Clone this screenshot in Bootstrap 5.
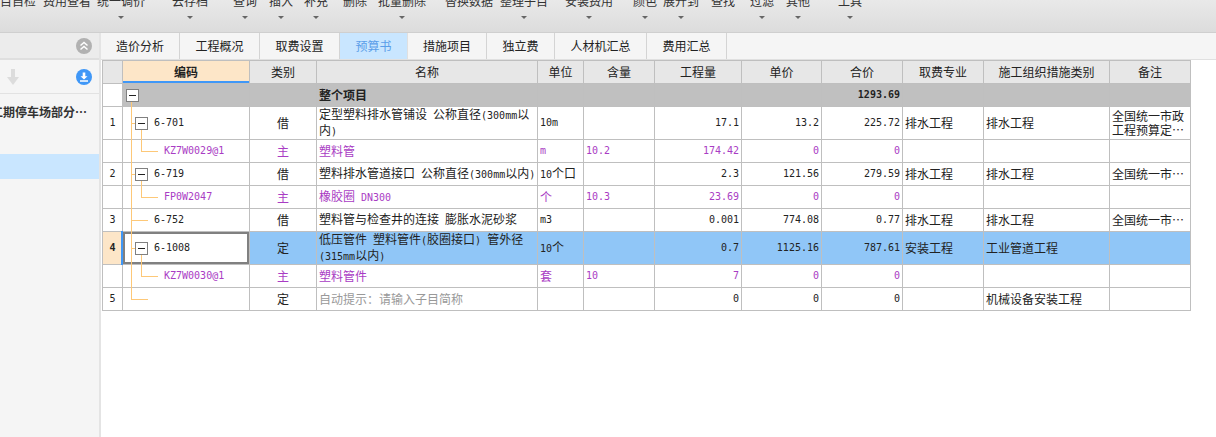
<!DOCTYPE html>
<html lang="zh-CN">
<head>
  <meta charset="UTF-8">
  <title>预算书</title>
  <link href="https://cdn.jsdelivr.net/npm/bootstrap@5.3.0/dist/css/bootstrap.min.css" rel="stylesheet">
  <style>
    html, body { height: 100%; overflow: hidden; }
    body {
      background: #fff;
      color: #222;
      font-family: "Noto Sans CJK SC", "Liberation Sans", sans-serif;
      font-size: 12px;
      line-height: 14px;
    }
    .ltn { font-family: "DejaVu Sans Mono", "Liberation Mono", monospace; font-size: 10px; }

    /* toolbar */
    .tool-bar {
      height: 33px;
      overflow: hidden;
      background: linear-gradient(#e9e9e9, #dcdcdc);
      border-bottom: 1px solid #cfcfcf;
    }
    .tool-grid {
      display: grid;
      grid-template-columns: 43px 54px 75px 61px 36px 35px 39px 35px 67px 55px 65px 68px 30px 48px 39px 36px 52px 48px;
      margin-top: -6px;
    }
    .tool-item { display: inline-flex; flex-direction: column; align-items: center; width: fit-content; height: 26px; color: #333; white-space: nowrap; }
    .tool-arrow {
      margin-top: 8px;
      border-left: 3px solid transparent;
      border-right: 3px solid transparent;
      border-top: 3px solid #666;
    }

    /* left panel */
    .side-panel { width: 101px; flex: none; height: 404px; background: #f5f5f5; border-right: 2px solid #e4e4e4; }
    .side-head { height: 27px; background: #ececec; border-bottom: 2px solid #dfdfdf; padding-right: 7px; }
    .side-tools { height: 34px; border-bottom: 1px solid #e2e2e2; padding: 0 7px 0 7px; }
    .side-title { height: 27px; padding-top: 11px; font-weight: 700; color: #333; white-space: nowrap; margin-left: -9px; }
    .side-gap { height: 33px; }
    .side-sel { height: 25px; background: #c9e6ff; }

    /* tabs */
    .tab-strip { height: 27px; background: #f5f5f5; border-bottom: 1px solid #e0e0e0; }
    .tab-cell {
      height: 26px;
      flex: none;
      border-right: 1px solid #d4d4d4;
      color: #222;
    }
    .tab-cell.active-tab { background: #c9e6ff; color: #5b9ee9; border-right-color: #e0e0e0; }
    .w-79 { width: 79px; }
    .w-80 { width: 80px; }
    .w-68 { width: 68px; }
    .w-92 { width: 92px; }

    /* sheet */
    .sheet-table.table { width: 1089px; table-layout: fixed; border-color: #bfbfbf; margin: 0 0 0 1px; --bs-table-color: #222; }
    .sheet-table.table > :not(caption) > * > * {
      padding: 0 2px;
      border-width: 1px;
      vertical-align: middle;
      font-weight: 400;
    }
    .sheet-table th { height: 23px; text-align: center; --bs-table-bg: #e7e7e7; font-size: 12px; }
    .sheet-table th.code-head { --bs-table-bg: #fde6c8; font-weight: 700 !important; box-shadow: inset 0 -2px 0 #3f97f7; }
    .sheet-table td { height: 23px; }
    .sheet-table tr.tall td { height: 33px; }
    .sheet-table tr.total { --bs-table-bg: #c0c0c0; }
    .sheet-table tr.total td { font-weight: 700 !important; }
    .sheet-table tr.picked { --bs-table-bg: #90c6f7; }
    .sheet-table tr.item-main { --bs-table-color: #a93cc4; color: #a93cc4; }
    .sheet-table td.row-no { text-align: center; --bs-table-bg: #fff; }
    .sheet-table td.row-on { --bs-table-bg: #fde6c8; font-weight: 700 !important; }
    .sheet-table td.num { text-align: right; }
    .sheet-table td.kind { text-align: center; }
    .sheet-table td.hint { color: #999; }
    .sheet-table td.name-cell { padding-right: 0 !important; }
    .sheet-table td.code-cell { position: relative; --bs-table-bg: #fff; padding-left: 31px !important; }
    .sheet-table td.code-cell.sub { padding-left: 41px !important; }
    .sheet-table td.code-cell.bar-top { --bs-table-bg: #c0c0c0; padding-left: 0 !important; }
    .sheet-table td.code-on { box-shadow: inset 0 0 0 2px #808080; }
    .code-on-mark { position: absolute; left: -2px; top: -1px; bottom: -1px; width: 2px; background: #3f97f7; }

    /* tree lines sit over the code cell */
    .tree-main { position: absolute; left: 8px; top: -1px; bottom: -1px; width: 1px; background: #fdc878; }
    .tree-main.end { bottom: 50%; }
    .tree-main.start { top: 18px; }
    .tree-dash { position: absolute; left: 8px; top: 50%; height: 1px; width: 5px; background: #fdc878; }
    .tree-dash.long { width: 17px; }
    .tree-sub { position: absolute; left: 18px; top: -1px; height: calc(50% + 1px); width: 1px; background: #fdc878; }
    .tree-sub-h { position: absolute; left: 18px; top: 50%; height: 1px; width: 17px; background: #fdc878; }
    .tree-stub { position: absolute; left: 18px; top: calc(50% + 6px); bottom: -1px; width: 1px; background: #fdc878; }
    .fold-box {
      position: absolute;
      left: 12px;
      top: calc(50% - 6px);
      width: 13px;
      height: 13px;
      background: #fff;
      border: 1px solid #808080;
    }
    .fold-box::after { content: ""; position: absolute; left: 2px; right: 2px; top: 5px; height: 1px; background: #222; }
    .fold-box.root { left: 3px; }
  </style>
</head>
<body>
  <!-- toolbar, scrolled so the big icons are out of view -->
  <div class="tool-bar">
    <div class="tool-grid">
      <div><span class="tool-item">目自检</span></div>
      <div><span class="tool-item">费用查看</span></div>
      <div><span class="tool-item">统一调价<i class="tool-arrow"></i></span></div>
      <div><span class="tool-item">云存档<i class="tool-arrow"></i></span></div>
      <div><span class="tool-item">查询<i class="tool-arrow"></i></span></div>
      <div><span class="tool-item">插入<i class="tool-arrow"></i></span></div>
      <div><span class="tool-item">补充<i class="tool-arrow"></i></span></div>
      <div><span class="tool-item">删除</span></div>
      <div><span class="tool-item">批量删除<i class="tool-arrow"></i></span></div>
      <div><span class="tool-item">替换数据</span></div>
      <div><span class="tool-item">整理子目<i class="tool-arrow"></i></span></div>
      <div><span class="tool-item">安装费用<i class="tool-arrow"></i></span></div>
      <div><span class="tool-item">颜色<i class="tool-arrow"></i></span></div>
      <div><span class="tool-item">展开到<i class="tool-arrow"></i></span></div>
      <div><span class="tool-item">查找</span></div>
      <div><span class="tool-item">过滤<i class="tool-arrow"></i></span></div>
      <div><span class="tool-item">其他<i class="tool-arrow"></i></span></div>
      <div><span class="tool-item">工具<i class="tool-arrow"></i></span></div>
    </div>
  </div>

  <div class="d-flex">
    <!-- left panel -->
    <div class="side-panel">
      <div class="side-head d-flex justify-content-end align-items-center">
        <svg width="16" height="16" viewBox="0 0 16 16"><circle cx="8" cy="8" r="8" fill="#b1b1b1"/><path d="M4.5 7.5 8 4.5l3.5 3M4.5 11.5 8 8.5l3.5 3" fill="none" stroke="#fff" stroke-width="1.5"/></svg>
      </div>
      <div class="side-tools d-flex justify-content-between align-items-center">
        <svg width="12" height="16" viewBox="0 0 12 16"><path d="M4 0h4v8h4l-6 8-6-8h4z" fill="#dcdcdc"/></svg>
        <svg width="16" height="16" viewBox="0 0 16 16"><circle cx="8" cy="8" r="8" fill="#3f97f7"/><path d="M6.700 3.500h2.600v3.700h2.200L8 10.400 4.500 7.200h2.200zM4 11.300h8v1.400H4z" fill="#fff"/></svg>
      </div>
      <div class="side-title">工期停车场部分…</div>
      <div class="side-gap"></div>
      <div class="side-sel"></div>
    </div>

    <div class="flex-grow-1">
      <!-- tabs -->
      <div class="tab-strip d-flex">
        <div class="tab-cell w-79 d-flex align-items-center justify-content-center">造价分析</div>
        <div class="tab-cell w-80 d-flex align-items-center justify-content-center">工程概况</div>
        <div class="tab-cell w-80 d-flex align-items-center justify-content-center">取费设置</div>
        <div class="tab-cell w-68 d-flex align-items-center justify-content-center active-tab">预算书</div>
        <div class="tab-cell w-79 d-flex align-items-center justify-content-center">措施项目</div>
        <div class="tab-cell w-68 d-flex align-items-center justify-content-center">独立费</div>
        <div class="tab-cell w-92 d-flex align-items-center justify-content-center">人材机汇总</div>
        <div class="tab-cell w-80 d-flex align-items-center justify-content-center">费用汇总</div>
      </div>

      <!-- budget sheet -->
      <div>
        <table class="table table-bordered sheet-table">
          <colgroup>
            <col width="20"><col width="127"><col width="67"><col width="221"><col width="46"><col width="71">
            <col width="87"><col width="80"><col width="81"><col width="81"><col width="126"><col width="81">
          </colgroup>
          <thead>
            <tr>
              <th></th><th class="code-head">编码</th><th>类别</th><th>名称</th><th>单位</th><th>含量</th>
              <th>工程量</th><th>单价</th><th>合价</th><th>取费专业</th><th>施工组织措施类别</th><th>备注</th>
            </tr>
          </thead>
          <tbody>
            <tr class="total">
              <td class="row-no"></td>
              <td class="code-cell bar-top"><span class="tree-main start"></span><span class="fold-box root"></span></td>
              <td></td><td>整个项目</td><td></td><td></td><td></td><td></td>
              <td class="num ltn">1293.69</td><td></td><td></td><td></td>
            </tr>
            <tr class="tall">
              <td class="row-no ltn">1</td>
              <td class="code-cell ltn"><span class="tree-main"></span><span class="tree-dash"></span><span class="tree-stub"></span><span class="fold-box"></span>6-701</td>
              <td class="kind">借</td><td class="name-cell">定型塑料排水管铺设<span class="ltn"> </span>公称直径<span class="ltn">(300mm</span>以内<span class="ltn">)</span></td><td class="ltn">10m</td><td></td>
              <td class="num ltn">17.1</td><td class="num ltn">13.2</td><td class="num ltn">225.72</td>
              <td>排水工程</td><td>排水工程</td><td>全国统一市政工程预算定…</td>
            </tr>
            <tr class="item-main">
              <td class="row-no"></td>
              <td class="code-cell sub ltn"><span class="tree-main"></span><span class="tree-sub"></span><span class="tree-sub-h"></span>KZ7W0029@1</td>
              <td class="kind">主</td><td>塑料管</td><td class="ltn">m</td><td class="ltn">10.2</td>
              <td class="num ltn">174.42</td><td class="num ltn">0</td><td class="num ltn">0</td><td></td><td></td><td></td>
            </tr>
            <tr>
              <td class="row-no ltn">2</td>
              <td class="code-cell ltn"><span class="tree-main"></span><span class="tree-dash"></span><span class="tree-stub"></span><span class="fold-box"></span>6-719</td>
              <td class="kind">借</td><td class="name-cell">塑料排水管道接口<span class="ltn"> </span>公称直径<span class="ltn">(300mm</span>以内<span class="ltn">)</span></td><td><span class="ltn">10</span>个口</td><td></td>
              <td class="num ltn">2.3</td><td class="num ltn">121.56</td><td class="num ltn">279.59</td>
              <td>排水工程</td><td>排水工程</td><td>全国统一市…</td>
            </tr>
            <tr class="item-main">
              <td class="row-no"></td>
              <td class="code-cell sub ltn"><span class="tree-main"></span><span class="tree-sub"></span><span class="tree-sub-h"></span>FP0W2047</td>
              <td class="kind">主</td><td>橡胶圈<span class="ltn"> DN300</span></td><td>个</td><td class="ltn">10.3</td>
              <td class="num ltn">23.69</td><td class="num ltn">0</td><td class="num ltn">0</td><td></td><td></td><td></td>
            </tr>
            <tr>
              <td class="row-no ltn">3</td>
              <td class="code-cell ltn"><span class="tree-main"></span><span class="tree-dash long"></span>6-752</td>
              <td class="kind">借</td><td>塑料管与检查井的连接<span class="ltn"> </span>膨胀水泥砂浆</td><td class="ltn">m3</td><td></td>
              <td class="num ltn">0.001</td><td class="num ltn">774.08</td><td class="num ltn">0.77</td>
              <td>排水工程</td><td>排水工程</td><td>全国统一市…</td>
            </tr>
            <tr class="tall picked">
              <td class="row-no row-on ltn">4</td>
              <td class="code-cell code-on ltn"><span class="code-on-mark"></span><span class="tree-main"></span><span class="tree-dash"></span><span class="tree-stub"></span><span class="fold-box"></span>6-1008</td>
              <td class="kind">定</td><td class="name-cell">低压管件<span class="ltn"> </span>塑料管件<span class="ltn">(</span>胶圈接口<span class="ltn">) </span>管外径<span class="ltn"> (315mm</span>以内<span class="ltn">)</span></td><td><span class="ltn">10</span>个</td><td></td>
              <td class="num ltn">0.7</td><td class="num ltn">1125.16</td><td class="num ltn">787.61</td>
              <td>安装工程</td><td>工业管道工程</td><td></td>
            </tr>
            <tr class="item-main">
              <td class="row-no"></td>
              <td class="code-cell sub ltn"><span class="tree-main"></span><span class="tree-sub"></span><span class="tree-sub-h"></span>KZ7W0030@1</td>
              <td class="kind">主</td><td>塑料管件</td><td>套</td><td class="ltn">10</td>
              <td class="num ltn">7</td><td class="num ltn">0</td><td class="num ltn">0</td><td></td><td></td><td></td>
            </tr>
            <tr>
              <td class="row-no ltn">5</td>
              <td class="code-cell ltn"><span class="tree-main end"></span><span class="tree-dash long"></span></td>
              <td class="kind">定</td><td class="hint">自动提示：请输入子目简称</td><td></td><td></td>
              <td class="num ltn">0</td><td class="num ltn">0</td><td class="num ltn">0</td>
              <td></td><td>机械设备安装工程</td><td></td>
            </tr>
          </tbody>
        </table>
      </div>
    </div>
  </div>
  <script src="https://cdn.jsdelivr.net/npm/bootstrap@5.3.0/dist/js/bootstrap.bundle.min.js"></script>
</body>
</html>
